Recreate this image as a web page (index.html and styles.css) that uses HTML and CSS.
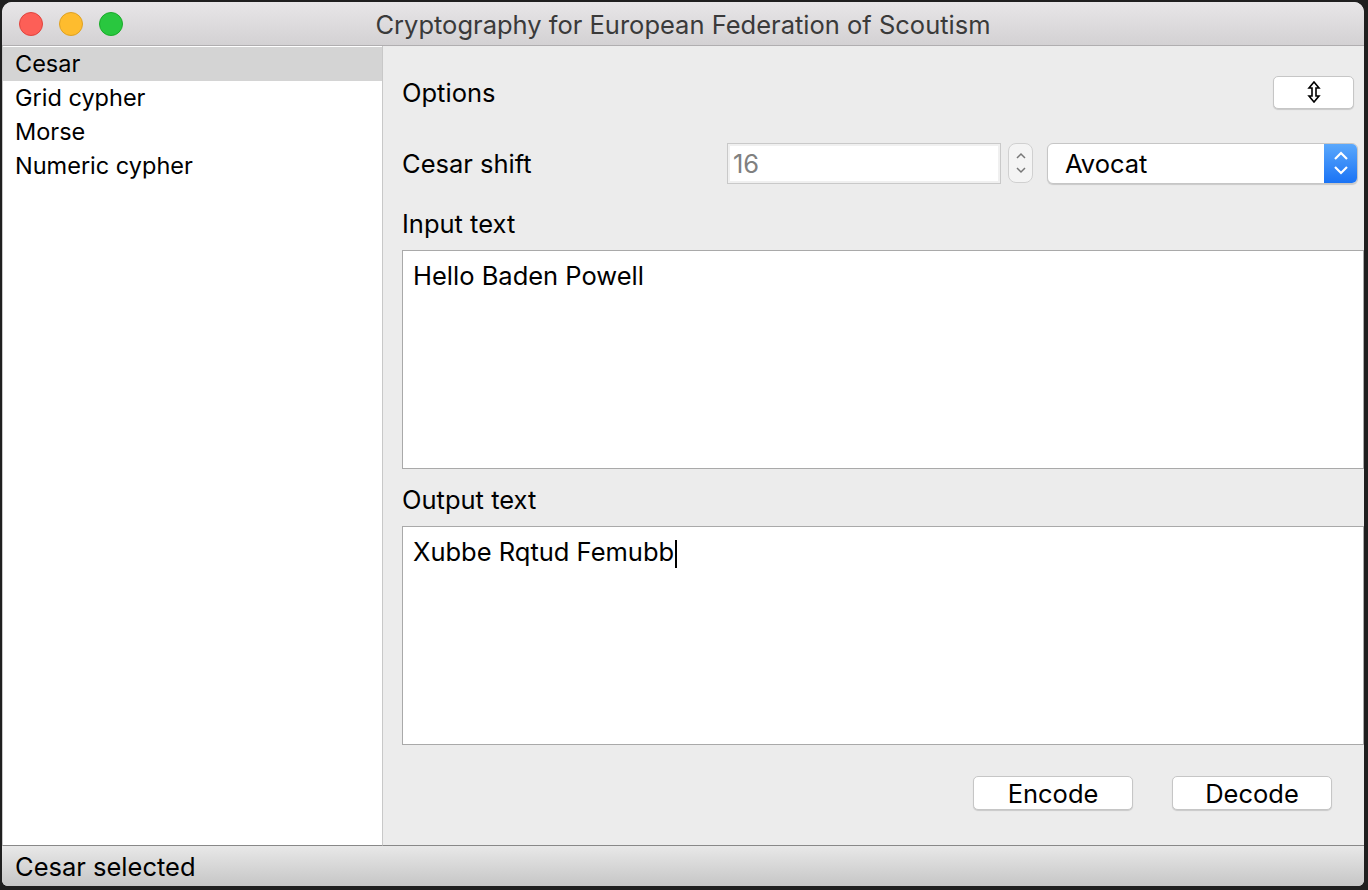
FILE: index.html
```html
<!DOCTYPE html>
<html>
<head>
<meta charset="utf-8">
<link rel="stylesheet" href="styles.css">
</head>
<body>
<div class="window">
  <div class="titlebar">
    <div class="lights">
      <span class="light red"></span>
      <span class="light yellow"></span>
      <span class="light green"></span>
    </div>
    <div class="title">Cryptography for European Federation of Scoutism</div>
  </div>
  <div class="main">
    <div class="sidebar">
      <div class="item selected">Cesar</div>
      <div class="item">Grid cypher</div>
      <div class="item">Morse</div>
      <div class="item">Numeric cypher</div>
    </div>
    <div class="panel">
      <div class="row options-row">
        <span class="label">Options</span>
        <button class="btn toggle"><svg width="14" height="22" viewBox="0 0 14 22"><path d="M7 1 L12 7 H9 V15 H12 L7 21 L2 15 H5 V7 H2 Z" fill="#fff" stroke="#000" stroke-width="1.6" stroke-linejoin="miter"/></svg></button>
      </div>
      <div class="row shift-row">
        <span class="label">Cesar shift</span>
        <div class="shift-controls">
          <div class="spinbox">16</div>
          <div class="stepper">
            <svg width="14" height="30" viewBox="0 0 14 30"><path d="M3 10 L7 6 L11 10" fill="none" stroke="#777" stroke-width="1.5"/><path d="M3 20 L7 24 L11 20" fill="none" stroke="#777" stroke-width="1.5"/></svg>
          </div>
          <div class="combo">
            <span class="combo-text">Avocat</span>
            <span class="combo-arrow"><svg width="18" height="32" viewBox="0 0 18 32"><path d="M3 12 L9 6 L15 12" fill="none" stroke="#fff" stroke-width="2.2"/><path d="M3 20 L9 26 L15 20" fill="none" stroke="#fff" stroke-width="2.2"/></svg></span>
          </div>
        </div>
      </div>
      <div class="label section-label input-label">Input text</div>
      <div class="textarea">Hello Baden Powell</div>
      <div class="label section-label output-label">Output text</div>
      <div class="textarea">Xubbe Rqtud Femubb<span class="caret"></span></div>
      <div class="actions">
        <button class="btn action">Encode</button>
        <button class="btn action">Decode</button>
      </div>
    </div>
  </div>
  <div class="statusbar">Cesar selected</div>
</div>
</body>
</html>
```
FILE: styles.css
```css
* { box-sizing: border-box; }
html, body { margin: 0; padding: 0; }
body {
  width: 1368px;
  height: 890px;
  background: #1f1f1f;
  font-family: "Inter", "Liberation Sans", sans-serif;
  font-size: 25.5px;
  color: #000;
  padding: 2px 4px 4px 2px;
  overflow: hidden;
}
.window {
  width: 1362px;
  height: 884px;
  background: #ececec;
  border-radius: 10px 10px 6px 6px;
  overflow: hidden;
  display: flex;
  flex-direction: column;
}
.titlebar {
  height: 44px;
  flex: none;
  background: linear-gradient(#e8e6e8, #d3d1d3);
  border-bottom: 1px solid #b0aeb0;
  display: flex;
  align-items: center;
  position: relative;
}
.lights {
  display: flex;
  gap: 16px;
  padding-left: 17px;
}
.light {
  width: 24px;
  height: 24px;
  border-radius: 50%;
  display: block;
}
.red { background: #fd5f57; border: 1px solid #e0443e; }
.yellow { background: #febc2e; border: 1px solid #dea123; }
.green { background: #29c73f; border: 1px solid #1aab29; }
.title {
  position: absolute;
  left: 0; right: 0;
  text-align: center;
  font-size: 25.5px;
  color: #3a3a3a;
  top: 7px;
}
.main {
  flex: 1;
  display: flex;
  min-height: 0;
}
.sidebar {
  width: 381px;
  flex: none;
  background: #fff;
  border-left: 1px solid #c8c8c8;
  border-right: 1px solid #c8c8c8;
  border-bottom: 1px solid #888;
  padding-top: 1px;
  font-size: 23.5px;
}
.item {
  height: 34px;
  line-height: 34px;
  padding-left: 12px;
}
.item.selected { background: #d4d4d4; }
.panel {
  flex: 1;
  display: flex;
  flex-direction: column;
  padding: 28px 0 0 19px;
  border-bottom: 1px solid #888;
}
.row {
  display: flex;
  align-items: center;
}
.label { color: #000; }
.options-row {
  height: 36px;
  justify-content: space-between;
  padding-right: 10px;
}
.btn {
  font-family: inherit;
  font-size: 25.5px;
  background: #fff;
  border: 1px solid #c6c6c6;
  border-radius: 5px;
  box-shadow: 0 1px 1px rgba(0,0,0,0.15);
  padding: 0;
  color: #000;
  display: flex;
  align-items: center;
  justify-content: center;
}
.toggle { width: 81px; height: 33px; }
.shift-row {
  margin-top: 32px;
  height: 42px;
}
.shift-controls {
  display: flex;
  align-items: center;
  margin-left: auto;
  padding-right: 6px;
}
.spinbox {
  width: 274px;
  height: 41px;
  background: #fff;
  border: 1px solid #c9c9c9;
  box-shadow: inset 0 0 0 2px #f0f0f0;
  color: #808080;
  padding-left: 5px;
  line-height: 39px;
}
.stepper {
  width: 25px;
  height: 40px;
  margin-left: 7px;
  border: 1px solid #d0d0d0;
  border-radius: 8px;
  background: #f4f4f4;
  display: flex;
  align-items: center;
  justify-content: center;
}
.combo {
  width: 311px;
  height: 41px;
  margin-left: 14px;
  background: #fff;
  border: 1px solid #c6c6c6;
  border-radius: 6px;
  box-shadow: 0 1px 1px rgba(0,0,0,0.15);
  display: flex;
  align-items: center;
  overflow: hidden;
}
.combo-text { flex: 1; padding-left: 17px; }
.combo-arrow {
  width: 33px;
  height: 100%;
  background: linear-gradient(#5aa8fc, #1a73f5);
  display: flex;
  align-items: center;
  justify-content: center;
}
.section-label {
  height: 29px;
  line-height: 29px;
}
.input-label { margin-top: 25px; }
.output-label { margin-top: 16px; }
.textarea {
  margin-top: 12px;
  height: 219px;
  background: #fff;
  border: 1px solid #a9a9a9;
  padding: 10px 0 0 10px;
  line-height: 30px;
}
.caret {
  display: inline-block;
  width: 2px;
  height: 28px;
  background: #000;
  vertical-align: -7px;
  margin-left: 1px;
}
.actions {
  display: flex;
  justify-content: flex-end;
  gap: 39px;
  margin-top: 31px;
  padding-right: 32px;
}
.action { width: 160px; height: 34px; }
.statusbar {
  height: 40px;
  flex: none;
  background: linear-gradient(#e8e8e8, #c6c6c6);
  padding-left: 13px;
  line-height: 42px;
}
```
